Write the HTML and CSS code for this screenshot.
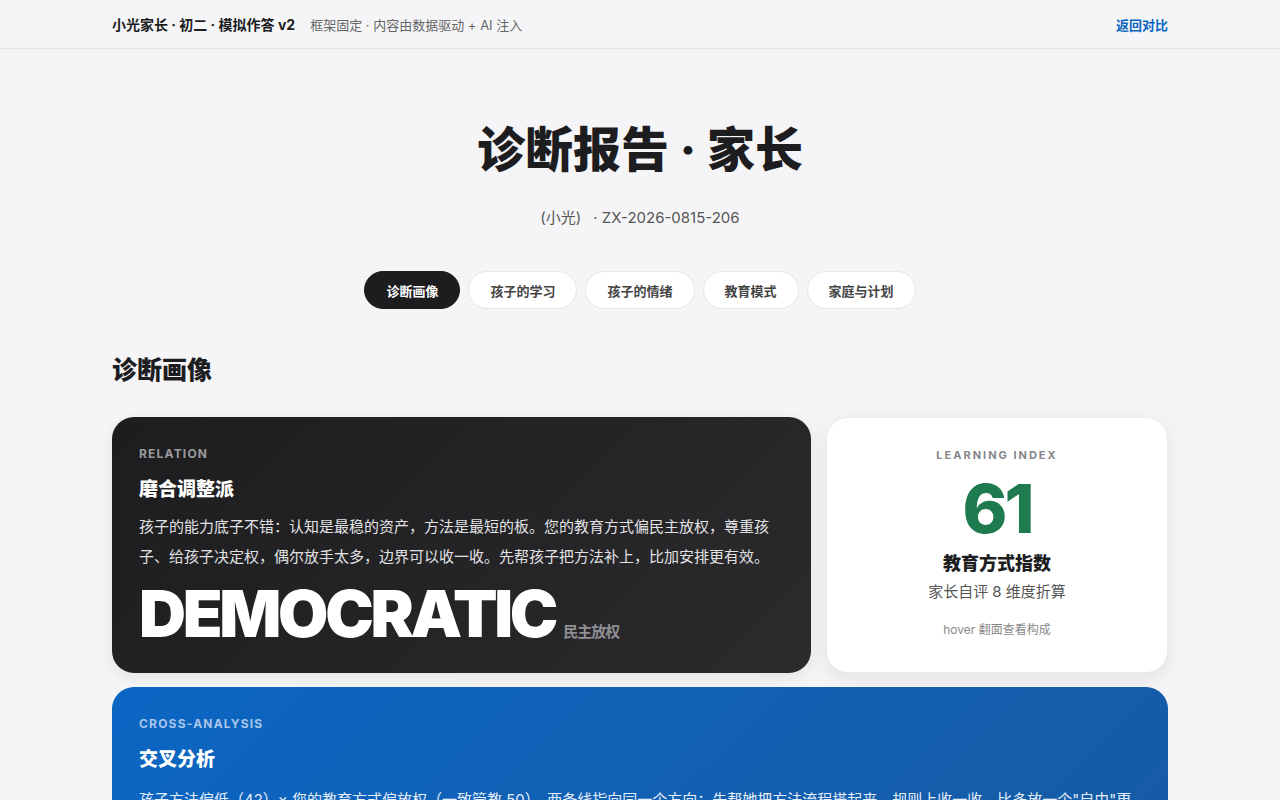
FILE: index.html
```html
<!DOCTYPE html>
<html lang="zh-CN">
<head>
<meta charset="utf-8">
<title>诊断报告 · 家长</title>
<link rel="stylesheet" href="styles.css">
</head>
<body>
<header class="topbar">
  <div class="topbar-inner">
    <div class="brand-group">
      <span class="brand">小光家长 · 初二 · 模拟作答 v2</span>
      <span class="brand-sub">框架固定 · 内容由数据驱动 + AI 注入</span>
    </div>
    <a class="back-link" href="#">返回对比</a>
  </div>
</header>
<main class="page">
  <section class="hero">
    <h1 class="hero-title">诊断报告 · 家长</h1>
    <p class="hero-sub"><span class="hero-name">(小光)</span>· ZX-2026-0815-206</p>
    <nav class="tabs">
      <a class="tab active" href="#">诊断画像</a>
      <a class="tab" href="#">孩子的学习</a>
      <a class="tab" href="#">孩子的情绪</a>
      <a class="tab" href="#">教育模式</a>
      <a class="tab" href="#">家庭与计划</a>
    </nav>
  </section>
  <h2 class="section-title">诊断画像</h2>
  <div class="grid">
    <div class="card card-dark">
      <div class="eyebrow eyebrow-dark">RELATION</div>
      <h3 class="card-title">磨合调整派</h3>
      <p class="card-text">孩子的能力底子不错：认知是最稳的资产，方法是最短的板。您的教育方式偏民主放权，尊重孩子、给孩子决定权，偶尔放手太多，边界可以收一收。先帮孩子把方法补上，比加安排更有效。</p>
      <div class="big-word"><span class="big-en">DEMOCRATIC</span><span class="big-cn">民主放权</span></div>
    </div>
    <div class="card card-white">
      <div class="eyebrow eyebrow-grey">LEARNING INDEX</div>
      <div class="score">61</div>
      <div class="score-title">教育方式指数</div>
      <div class="score-sub">家长自评 8 维度折算</div>
      <div class="score-hint">hover 翻面查看构成</div>
    </div>
    <div class="card card-blue">
      <div class="eyebrow eyebrow-blue">CROSS-ANALYSIS</div>
      <h3 class="card-title">交叉分析</h3>
      <p class="card-text">孩子方法偏低（42）× 您的教育方式偏放权（一致管教 50）。两条线指向同一个方向：先帮她把方法流程搭起来，规则上收一收，比多放一个"自由"更有用。</p>
    </div>
  </div>
</main>
</body>
</html>
```
FILE: styles.css
```css
* { box-sizing: border-box; }
html, body { margin: 0; padding: 0; }
body {
  background: #f5f5f7;
  color: #1d1d1f;
  font-family: Inter, "Noto Sans CJK SC", "Noto Sans", sans-serif;
}
.topbar {
  height: 49px;
  border-bottom: 1px solid #e3e3e6;
  background: #f5f5f7;
}
.topbar-inner {
  width: 1056px;
  margin: 0 auto;
  height: 48px;
  display: flex;
  align-items: center;
  justify-content: space-between;
}
.brand-group { display: flex; align-items: center; gap: 15px; }
.brand { font-size: 14px; font-weight: 700; color: #1d1d1f; }
.brand-sub { font-size: 13px; color: #666; }
.back-link { font-size: 13px; font-weight: 700; color: #0a66c2; text-decoration: none; }
.page { width: 1056px; margin: 0 auto; }
.hero { text-align: center; padding-top: 69px; }
.hero-title {
  margin: 0;
  font-size: 48px;
  line-height: 64px;
  font-weight: 800;
  letter-spacing: 0;
}
.hero-sub {
  margin: 26px 0 0;
  font-size: 15px;
  line-height: 20px;
  color: #555;
}
.hero-name { margin-right: 12px; }
.tabs {
  margin-top: 43px;
  display: flex;
  justify-content: center;
  gap: 8px;
}
.tab {
  height: 38px;
  padding: 0 21px;
  border-radius: 19px;
  background: #fff;
  border: 1px solid #e6e6ea;
  display: flex;
  align-items: center;
  font-size: 13px;
  font-weight: 700;
  color: #444;
  text-decoration: none;
}
.tab.active { background: #1d1d1f; border-color: #1d1d1f; color: #fff; }
.section-title {
  margin: 44px 0 0;
  font-size: 25px;
  line-height: 34px;
  font-weight: 800;
}
.grid {
  margin-top: 30px;
  display: grid;
  grid-template-columns: 699px 342px;
  column-gap: 15px;
  row-gap: 14px;
}
.card {
  border-radius: 22px;
  padding: 29px 27px 27px;
}
.card-dark {
  height: 256px;
  background: linear-gradient(135deg, #1d1d1f 0%, #2b2b2e 100%);
  color: #fff;
  box-shadow: 0 4px 16px rgba(0,0,0,0.08);
}
.card-white {
  height: 256px;
  background: #fff;
  text-align: center;
  box-shadow: 0 6px 20px rgba(0,0,0,0.08);
  border: 1px solid #ececef;
}
.card-blue {
  grid-column: 1 / span 2;
  height: 240px;
  background: linear-gradient(135deg, #0b66c3 0%, #175aa2 100%);
  color: #fff;
}
.eyebrow {
  font-size: 12px;
  line-height: 16px;
  font-weight: 700;
  letter-spacing: 1.2px;
}
.eyebrow-dark { color: #9a9a9e; }
.eyebrow-grey { color: #86868b; font-size: 11px; letter-spacing: 2px; }
.eyebrow-blue { color: #a8c6ea; }
.card-title {
  margin: 15px 0 0;
  font-size: 19px;
  line-height: 26px;
  font-weight: 800;
  color: #fff;
}
.card-text {
  margin: 9px 0 0;
  font-size: 15px;
  line-height: 30px;
  color: #e2e2e5;
}
.card-blue .card-text { color: #e6eefa; margin-top: 12px; }
.big-word {
  margin-top: 8px;
  display: flex;
  align-items: baseline;
}
.big-en {
  font-size: 65px;
  line-height: 68px;
  font-weight: 900;
  letter-spacing: -3.3px;
  color: #fff;
}
.big-cn {
  margin-left: 8px;
  font-size: 15px;
  font-weight: 700;
  color: #8e8e93;
  letter-spacing: -1px;
}
.score {
  margin-top: 9px;
  font-size: 68px;
  line-height: 72px;
  font-weight: 800;
  color: #1e7a4f;
  letter-spacing: -3px;
}
.score-title {
  margin-top: 7px;
  font-size: 18px;
  line-height: 26px;
  font-weight: 800;
  color: #1d1d1f;
}
.score-sub {
  margin-top: 5px;
  font-size: 15px;
  line-height: 20px;
  color: #555;
}
.score-hint {
  margin-top: 20px;
  font-size: 12px;
  line-height: 16px;
  color: #888;
}
```
